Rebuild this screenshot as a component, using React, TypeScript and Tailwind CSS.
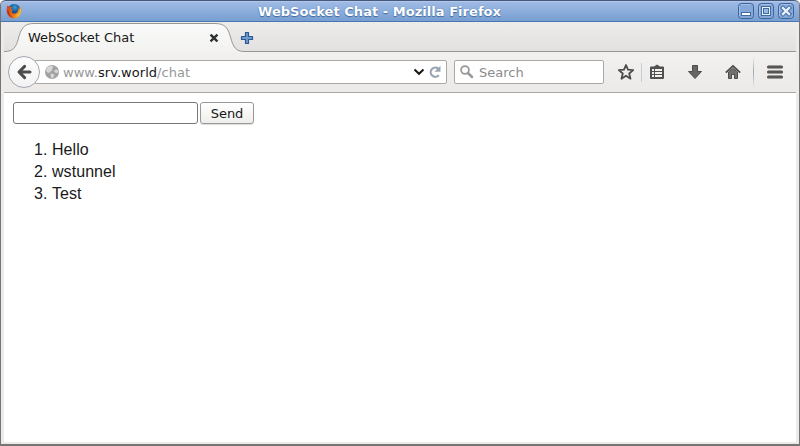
import React from "react";

function FirefoxLogo() {
  return (
    <svg width="16" height="16" viewBox="0 0 16 16" className="ml-[5px] shrink-0">
      <defs>
        <radialGradient id="globe" cx="55%" cy="25%" r="70%">
          <stop offset="0" stopColor="#3aa0d8" />
          <stop offset="0.45" stopColor="#175a9c" />
          <stop offset="1" stopColor="#0b2456" />
        </radialGradient>
        <linearGradient id="fox" x1="0" y1="0" x2="1" y2="0.4">
          <stop offset="0" stopColor="#c4441f" />
          <stop offset="0.55" stopColor="#e8661a" />
          <stop offset="1" stopColor="#f2a72b" />
        </linearGradient>
      </defs>
      <circle cx="8.2" cy="7.7" r="6.8" fill="url(#globe)" />
      <path d="M1.3 2.6C2.2 3.4 3 3.7 4.2 3.6C5.2 3.6 5.6 4.2 6.2 4.7L5 5.8C5.2 6.7 6.2 6.6 6.9 7L5.8 8.2C5.7 10.2 7.7 11 9.6 10.4C12 9.600 12.6 7 12.2 4.900C12.800 5.400 13.200 6.200 13.200 6.700C13.600 4.800 13.300 3.600 12.700 2.400C14.700 3.800 15.500 5.900 15.100 8.700C14.600 12.500 11.700 15.400 8 15.400C4 15.400 .9 12.500 .7 8.500C.6 6.400 .8 4.600 1.300 2.600Z" fill="url(#fox)" />
      <path d="M14.100 5.400C14.800 9.500 12.500 12.400 9 13C12 14.200 15.400 11.500 14.900 7.200Z" fill="#f3bd3a" />
      <path d="M1.200 7C1 11 4 14.900 8 15C4.800 13.800 3 11.500 2.800 8Z" fill="#a93320" />
    </svg>
  );
}

function WindowButton({ children }: { children: React.ReactNode }) {
  return (
    <svg width="16" height="16" viewBox="0 0 16 16" className="shrink-0">
      <rect x=".5" y=".5" width="15" height="15" rx="3" fill="#85a8da" stroke="#3e6396" />
      <path d="M3 1.5h10M1.5 3v10" stroke="#a5c0e6" fill="none" />
      {children}
    </svg>
  );
}

function TitleBar() {
  return (
    <div className="flex h-[22px] shrink-0 items-center rounded-t-[5px] border-t border-b border-t-[#46587c] border-b-[#4977b1] bg-linear-to-b from-[#a1bce6] to-[#779fd1] shadow-[inset_0_1px_0_#b2c8ea]">
      <FirefoxLogo />
      <div className="ml-[236px] w-[246px] whitespace-nowrap pt-[2px] font-['DejaVu_Sans'] text-[13px] leading-[20px] font-bold tracking-[0.04px] text-white [text-shadow:0_1px_1px_#3f689f,0_0_1px_#507cb4]">
        WebSocket Chat - Mozilla Firefox
      </div>
      <div className="mr-[5px] ml-auto flex gap-1">
        <WindowButton>
          <rect x="3.5" y="9.5" width="9" height="3" fill="#fff" stroke="#416ba3" />
        </WindowButton>
        <WindowButton>
          <rect x="3.500" y="3.500" width="9" height="9" fill="#e8f0fb" stroke="#416ba3" />
          <rect x="5.500" y="5.500" width="5" height="5" fill="#9ab7e0" stroke="#416ba3" />
        </WindowButton>
        <WindowButton>
          <path d="M5 5l6 6m0-6l-6 6" stroke="#416ba3" strokeWidth="4.4" strokeLinecap="square" />
          <path d="M5 5l6 6m0-6l-6 6" stroke="#e9f0fa" strokeWidth="2.4" strokeLinecap="square" />
        </WindowButton>
      </div>
    </div>
  );
}

function TabStrip() {
  return (
    <div className="relative flex h-[30px] shrink-0 items-center bg-linear-to-b from-[#edecea] to-[#e2e1df]">
      <svg width="792" height="30" viewBox="0 0 792 30" className="absolute inset-0">
        <defs>
          <linearGradient id="tab" x1="0" y1="0" x2="0" y2="1">
            <stop offset="0" stopColor="#fafafa" />
            <stop offset="1" stopColor="#f2f2f0" />
          </linearGradient>
        </defs>
        <path d="M0 29.5h1C9 29.5 12 25 14 18C17 6 20 1.5 30 1.5H211C221 1.5 224 6 226.5 15C229 25 232 29.5 240 29.5V30H0Z" fill="url(#tab)" />
        <path d="M0 29.5h1C9 29.5 12 25 14 18C17 6 20 1.5 30 1.5H211C221 1.5 224 6 226.5 15C229 25 232 29.5 240 29.5H792" fill="none" stroke="#979693" />
      </svg>
      <div className="relative ml-6 w-[181px] pt-[2px] font-['DejaVu_Sans'] text-[13px] leading-[30px] text-[#171717]">WebSocket Chat</div>
      <svg width="10" height="10" viewBox="0 0 10 10" className="relative mt-px">
        <path d="M2.400 2.400l5.200 5.200m0-5.200l-5.200 5.200" stroke="#2e3436" strokeWidth="2.4" strokeLinecap="square" />
      </svg>
      <svg width="14" height="14" viewBox="0 0 14 14" className="relative mt-[2px] ml-[21px]">
        <path d="M5.500 1.500h3v4h4v3h-4v4h-3v-4h-4v-3h4Z" fill="#709bcd" stroke="#2b5796" strokeWidth="1.2" strokeLinejoin="round" />
      </svg>
    </div>
  );
}

function AddressBar() {
  return (
    <div className="flex">
      <div className="relative z-10 flex size-8 shrink-0 items-center justify-center rounded-full border border-[#a2a8b0] bg-linear-to-b from-[#fcfcfc] to-[#f3f3f3]">
        <svg width="16" height="16" viewBox="0 0 16 16">
          <path d="M8.600 2.400L3 8L8.600 13.600M3.500 8H14" fill="none" stroke="#4a4c4d" strokeWidth="3" strokeLinecap="round" strokeLinejoin="round" />
        </svg>
      </div>
      <div className="-ml-[5px] mt-1 flex h-6 w-[412px] items-center rounded-r-[2px] border border-[#aaa9a6] bg-white pl-2 font-['DejaVu_Sans'] text-[13px] text-[#979797]">
        <svg width="16" height="16" viewBox="0 0 16 16" className="shrink-0">
          <circle cx="8" cy="8" r="7" fill="#a2a2a2" />
          <path d="M2 5L4.500 2.500L8 1.800L9.500 3L8 4.500L8.500 6L6.500 7.500L5 9L2.500 8Z" fill="#d6d6d6" />
          <path d="M10 7L12 5.200L14.300 6.500L14.400 8.500L12.500 9L11 8.600Z" fill="#d6d6d6" />
          <path d="M6.500 9.500L9.500 10L10.500 11.500L8.500 14.300L7 13.500Z" fill="#d6d6d6" />
        </svg>
        <span className="ml-[3px] pt-px tracking-[0.04px]">www.<span className="text-[#171717]">srv.world</span>/chat</span>
        <svg width="12" height="8" viewBox="0 0 12 8" className="mr-[3px] ml-auto">
          <path d="M1.500 1.500L6 5.800L10.500 1.500" fill="none" stroke="#171717" strokeWidth="2" />
        </svg>
        <svg width="14" height="14" viewBox="0 0 14 14" className="mr-1">
          <path d="M10.800 10.200A4.600 4.600 0 1 1 10.200 3.600" fill="none" stroke="#98a4b2" strokeWidth="2.2" />
          <path d="M12.500 .8V6.800H6.500Z" fill="#98a4b2" />
        </svg>
      </div>
    </div>
  );
}

function Toolbar() {
  return (
    <div className="flex h-[41px] shrink-0 items-center border-b border-[#aaa9a6] bg-linear-to-b from-[#f2f1f0] to-[#ebeae8] pl-1">
      <AddressBar />
      <div className="ml-[7px] flex h-6 w-[150px] items-center rounded-[2px] border border-[#aaa9a6] bg-white pl-1 font-['DejaVu_Sans'] text-[13px] text-[#8b8b8b]">
        <svg width="16" height="16" viewBox="0 0 16 16" className="mr-1">
          <circle cx="6" cy="6" r="3.900" fill="none" stroke="#999" strokeWidth="1.8" />
          <path d="M9 9l4 4" stroke="#999" strokeWidth="2.5" strokeLinecap="round" />
        </svg>
        <span className="pt-px">Search</span>
      </div>
      <svg width="18" height="18" viewBox="0 0 18 18" className="ml-[13px]">
        <path d="M9 2L11 6.700L16.200 7.100L12.200 10.500L13.500 15.700L9 12.800L4.500 15.700L5.800 10.500L1.800 7.100L7 6.700Z" fill="none" stroke="#4c4c4c" strokeWidth="1.8" strokeLinejoin="round" />
      </svg>
      <div className="ml-[6px] h-[19px] w-px bg-[#c7cdd4]" />
      <svg width="16" height="16" viewBox="0 0 16 16" className="ml-[7px]">
        <path d="M1 3.500Q1 2.500 2 2.500H5L8 .5L11 2.500H14Q15 2.500 15 3.500V14Q15 15 14 15H2Q1 15 1 14Z" fill="#505050" />
        <path d="M3 5h2v2H3ZM6 5h7v2H6ZM3 8h2v2H3ZM6 8h7v2H6ZM3 11h2v2H3ZM6 11h7v2H6Z" fill="#f0f0f0" />
      </svg>
      <svg width="16" height="16" viewBox="0 0 16 16" className="ml-[22px]">
        <path d="M5.500 1.500h5v6h4L8 14.500L1.500 7.500h4Z" fill="#666" stroke="#4c4c4c" strokeLinejoin="round" />
      </svg>
      <svg width="16" height="16" viewBox="0 0 16 16" className="ml-[22px]">
        <path d="M3.500 8L8 4.500L12.500 8V14.500H9.500V10.500H6.500V14.500H3.500Z" fill="#707070" stroke="#4c4c4c" />
        <path d="M.8 8.700L8 2L15.200 8.700" fill="none" stroke="#4c4c4c" strokeWidth="1.8" />
      </svg>
      <div className="ml-3 h-8 w-px bg-linear-to-b from-transparent via-[#9da8b3] to-transparent" />
      <svg width="16" height="14" viewBox="0 0 16 14" className="ml-[13px]">
        <path d="M1.500 2h13M1.500 7h13M1.500 12h13" stroke="#474747" strokeWidth="3" strokeLinecap="round" />
        <path d="M1.500 2h13M1.500 7h13M1.500 12h13" stroke="#666" strokeLinecap="round" />
      </svg>
    </div>
  );
}

export default function App() {
  return (
    <div className="h-[446px] w-[800px] bg-white">
      <div className="flex h-full flex-col overflow-hidden rounded-t-[5px] border-x border-b-2 border-[#777573] bg-[#edebea]">
        <TitleBar />
        <div className="mr-[3px] mb-[2px] ml-[3px] flex min-h-0 flex-1 flex-col">
          <TabStrip />
          <Toolbar />
          <main className="flex-1 bg-white pt-[9px] pl-[9px]">
            <form className="flex gap-[2px]" onSubmit={(event) => event.preventDefault()}>
              <input aria-label="Message" className="h-[22px] w-[185px] rounded-[3px] border border-[#777] bg-white px-1 text-[13px] outline-none" />
              <button className="h-[22px] w-[54px] rounded-[3px] border border-[#999894] bg-linear-to-b from-white to-[#eeeeec] pt-px font-['DejaVu_Sans'] text-[13px] leading-none text-[#171717] shadow-[0_1px_1px_#ddd]">Send</button>
            </form>
            <ol className="mt-[15px] list-decimal pl-[39px] font-['Liberation_Sans'] text-[16px] leading-[22px] tracking-[0.06px] text-[#1a1a1a]">
              <li>Hello</li>
              <li>wstunnel</li>
              <li>Test</li>
            </ol>
          </main>
        </div>
      </div>
    </div>
  );
}
